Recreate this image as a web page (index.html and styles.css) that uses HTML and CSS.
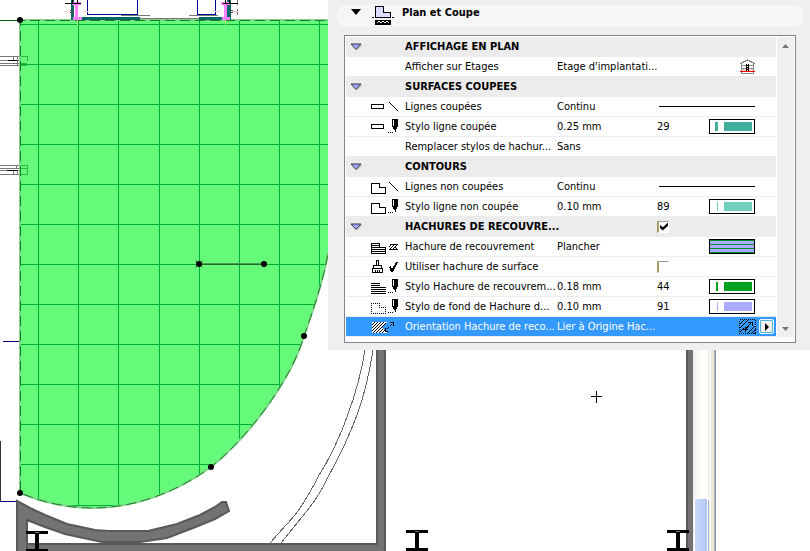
FILE: index.html
```html
<!DOCTYPE html>
<html lang="fr">
<head>
<meta charset="utf-8">
<title>Plan et Coupe</title>
<link rel="stylesheet" href="styles.css">
</head>
<body>
<svg class="defs" width="0" height="0" aria-hidden="true">
  <defs>
    <symbol id="toggle" viewBox="0 0 12 8"><path d="M1 1H11L6 6.500Z" fill="#a5a5ff" stroke="#333"/><path d="M7 7L12 2" stroke="#bbb"/></symbol>
    <symbol id="i-rect" viewBox="0 0 32 19"><path d="M1.500 7.500H13.500V11.500H1.500Z" fill="#fff" stroke="#000"/></symbol>
    <symbol id="i-line" viewBox="0 0 32 19"><path d="M19 5L28 14" stroke="#000"/></symbol>
    <symbol id="i-pen" viewBox="0 0 32 19"><path d="M22 2H28V10H27V12H26V15H25V13H24V12H23V10H22Z"/><path d="M23 3H24V9H23Z" fill="#fff"/><path d="M18 15h1v1h-1zM20 15h1v1h-1zM22 15h1v1h-1z"/></symbol>
    <symbol id="i-shape" viewBox="0 0 32 19"><path d="M1.500 6.500H9.500V10.500H15.500V16.500H1.500Z" fill="#fff" stroke="#000"/></symbol>
    <symbol id="i-cover" viewBox="0 0 32 19"><path d="M1.500 6.500H9.500V10.500H15.500V16.500H1.500ZM1 8.500H9M1 10.500H9M1 12.500H15M1 14.500H15" fill="none" stroke="#000"/></symbol>
    <symbol id="i-hatch" viewBox="0 0 32 19"><path d="M20 7.500H28M19 12.500H28M19 10L22 7M20 12L25 7M23 12L27 8M25 10L27 12" fill="none" stroke="#000"/></symbol>
    <symbol id="i-brush" viewBox="0 0 32 19"><path d="M6.500 8V3.500H8.500V8M3.500 11V8.500H11.500V11M2 11.500H13M2.500 12V15.500H12.500V12M5.500 13V15M7.500 13V15M9.500 13V15" fill="none" stroke="#000"/></symbol>
    <symbol id="i-check" viewBox="0 0 32 19"><path d="M19 10L21 9L22 12L26 5H28L23 15H21Z"/></symbol>
    <symbol id="i-lines" viewBox="0 0 32 19"><path d="M1 6.500H10M1 8.500H10M1 10.500H16M1 12.500H16M1 14.500H16M1 16.500H16" stroke="#000"/></symbol>
    <symbol id="i-dots" viewBox="0 0 32 19"><path d="M1 6.500H10M2 10.500M9.500 8V10.500M11 10.500H16M15.500 12V16M1 16.500H16M1.500 8V16" fill="none" stroke="#000" stroke-dasharray="1 1"/></symbol>
    <symbol id="i-orient" viewBox="0 0 32 19"><path d="M2 5H17L12 10L17 16H2Z" fill="#fff"/><path d="M2 8L5 5M2 11L8 5M2 14L11 5M3 16L14 5M6 16L16 6M9 16L13 12M12 16L15 13" stroke="#000"/><path d="M17 12L23 6" stroke="#000" stroke-dasharray="3 1"/><path d="M20 5.500H23.500V9M15.500 11V14.500H18" fill="none" stroke="#000"/></symbol>
  </defs>
</svg>

<main class="workspace">
  <svg class="plan" viewBox="0 0 810 551" preserveAspectRatio="xMinYMin slice" role="img" aria-label="Dessin en plan">
    <defs>
      <clipPath id="slab"><path d="M20 20H340V200L328 252C325 275 313 311 304 336C292 378 250 436 211 467C177 492 135 508 93 508C68 508 44 503 20 493Z"/></clipPath>
      <linearGradient id="track"><stop offset="0" stop-color="#f0efeb"/><stop offset=".6" stop-color="#fefefa"/><stop offset="1" stop-color="#fefefa"/></linearGradient>
      <linearGradient id="thumb"><stop offset="0" stop-color="#cbd9fc"/><stop offset="1" stop-color="#b0c8f8"/></linearGradient>
      <g id="beam"><path d="M0 0H22V3H13V18H22V22H0V18H9V3H0Z"/><path d="M9 1H13V2H9Z" fill="#777"/></g>
    </defs>

    <g shape-rendering="crispEdges" fill="none">
      <path d="M0 20.500H20" stroke="#006400"/>
      <g stroke="#777">
        <path d="M0 56.500H27.500V60.500M13.500 57V60M17.500 57V65M0 60.500H27M0 63.500H27M0 65.500H27"/>
        <path d="M0 165.500H27.500V174.500M16.500 166V168M0 168.500H27M0 170.500H27M0 174.500H27M13.500 171V174M17.500 171V174"/>
      </g>
      <path d="M8 60.500H17M7 170.500H17" stroke="#000"/>
      <path d="M3 341.500H20M0 501.500H17" stroke="#000080"/>
      <path d="M0.500 441V501" stroke="#333"/>
    </g>

    <g clip-path="url(#slab)">
      <path d="M20 20H340V520H20Z" fill="#66fa7a"/>
      <path d="M38.500 20V520M78.500 20V520M118.500 20V520M159.500 20V520M199.500 20V520M239.500 20V520M279.500 20V520M319.500 20V520M20 24.500H340M20 64.500H340M20 104.500H340M20 144.500H340M20 184.500H340M20 224.500H340M20 264.500H340M20 304.500H340M20 344.500H340M20 384.500H340M20 424.500H340M20 464.500H340M20 505.500H340" stroke="#00ac38" shape-rendering="crispEdges"/>
      <path d="M20 56.500H27.500V60.500M20 63.500H27M20 65.500H27M20 165.500H27.500V174.500M20 168.500H27M20 174.500H27" stroke="#35b045" fill="none" shape-rendering="crispEdges"/>
    </g>
    <path d="M340 20H20V493C44 503 68 508 93 508C135 508 177 492 211 467C250 436 292 378 304 336C313 311 325 275 328 252" fill="none" stroke="#7fd58a" stroke-width="2"/>
    <path d="M340 20.500H20.500V493C44 503 68 508 93 508C135 508 177 492 211 467C250 436 292 378 304 336C313 311 325 275 328 252" fill="none" stroke="#1d7a24" stroke-dasharray="10 5"/>

    <g shape-rendering="crispEdges">
      <path d="M71 0H74V20H71ZM81 17H140V20H81ZM199 17H225V20H199ZM227 0H231V20H227Z" fill="#006666"/>
      <path d="M87.500 0V14.500H137.500V0M197.500 0V14.500H215.500V0" fill="#fff" stroke="#000099"/>
      <path d="M121 15.500H150M189 15.500H218M139 18.500H199M237.500 0V5M237.500 9V15" stroke="#777"/>
      <path d="M64 11.500H71M83 11.500H90M213 11.500H221M232 11.500H239" stroke="#ffd5d5"/>
      <path d="M70 10.500H74M70 12.500H74M230 10.500H233M230 12.500H233" stroke="#555"/>
      <path d="M75 2H78V17H82V20H73V17H75ZM72 2H81V5H72ZM224 2H227V17H230V20H222V17H224ZM221 2H230V5H221Z" fill="#ff80ff"/>
      <path d="M65 3.500H81M223 3.500H238M72.500 0V3M77.500 0V3M225.500 0V3M229.500 0V3" stroke="#000"/>
      <path d="M77.500 20V25M225.500 20V25" stroke="#a5e67a"/>
    </g>

    <g fill="#737373" stroke="#595959" stroke-width="2">
      <path d="M377 340V544H27V560H385V340Z"/>
      <path d="M17 501L30 508L45 515L67 524L95 530L108 531H148L177 524L200 515L215 507L222 502L226 502L229 511L215 519L193 528L167 538L140 542H102L65 534L45 527L27 520V560H17Z"/>
    </g>
    <path d="M686 340H693V551H686Z" fill="#737373"/>
    <path d="M686 340H688V551H686Z" fill="#595959"/>
    <path d="M365 350Q360 382 347 417Q335 450 318 477Q307 499 295 515L270 543M373 350Q367 388 357 415Q345 447 328 477Q320 494 310 507L281 543" fill="none" stroke="#666" shape-rendering="crispEdges"/>
    <path d="M693 340H708V551H693Z" fill="url(#track)"/>
    <path d="M708 340H711V551H708Z" fill="#f0eee6"/>
    <path d="M710 340H711V551H710Z" fill="#fff"/>
    <path d="M711 340H715V551H711Z" fill="#ebe8d8"/>
    <path d="M714 340H715V551H714Z" fill="#b5b09f"/>
    <path d="M715 340H716V551H715Z" fill="#849bbd"/>
    <path d="M694 498H709V551H694Z" fill="#fff"/>
    <path d="M695 499H707V551H695Z" fill="url(#thumb)"/>
    <path d="M708 500H709V551H708Z" fill="#9db5e4"/>
    <use href="#beam" x="26" y="531"/>
    <use href="#beam" x="406" y="530"/>
    <use href="#beam" x="667" y="530"/>
    <path d="M591 396.500H602M596.500 391V403" stroke="#000" shape-rendering="crispEdges"/>
    <path d="M199 263.500H264" stroke="#4a9a50"/>
    <path d="M199 264.500H264" stroke="#1d6a24"/>
    <path d="M195.500 260.500L202.500 267.500M195.500 267.500L202.500 260.500" stroke="#2a8035"/>
    <g fill="#000"><circle cx="20" cy="20" r="3"/><circle cx="199" cy="264" r="3"/><circle cx="264" cy="264" r="3"/><circle cx="304" cy="336" r="3"/><circle cx="211" cy="467" r="3"/><circle cx="20" cy="493" r="3"/></g>
  </svg>

  <section class="panel">
    <header class="panel-head">
      <button class="fold" type="button" aria-label="Replier"><svg width="10" height="6" viewBox="0 0 10 6"><path d="M0 0H10L5 6Z"/></svg></button>
      <svg class="head-icon" width="22" height="20" viewBox="0 0 22 20" shape-rendering="crispEdges"><path d="M3.500 11.500V.500H11.500V6.500H18.500V11.500Z" fill="#dcdcff" stroke="#000"/><path d="M0 11.500H2M20 11.500H22" stroke="#000"/><path d="M3 14H19V19H3Z"/><path d="M5 17L7 15L9 17L11 15L13 17L15 15L17 17" fill="none" stroke="#fff"/></svg>
      <h1>Plan et Coupe</h1>
    </header>

    <div class="list">
      <table class="props">
        <colgroup><col class="c-icon"><col class="c-label"><col class="c-value"><col class="c-edit"></colgroup>
        <tbody>
          <tr class="group"><td><button class="toggle" type="button" aria-label="Replier"><svg width="12" height="8"><use href="#toggle"/></svg></button></td><th colspan="3">AFFICHAGE EN PLAN</th></tr>
          <tr><td></td><td>Afficher sur Etages</td><td>Etage d'implantati...</td><td><div class="edit"><svg class="house" width="15" height="15" viewBox="0 0 15 15" shape-rendering="crispEdges"><path d="M0 4.500H1M14 4.500H15M1 3.500H4M11 3.500H14M3 2.500H6M9 2.500H12M5 1.500H10M7 .500H8M1.500 4V14.500H13.500V4M1 6.500H14M1 9.500H14" fill="none" stroke="#888"/><path d="M2 10H13V12H2Z" fill="#ffd0c8"/><path d="M6 5H7V12H6ZM8 5H9V12H8ZM7 6H8V7H7ZM7 8H8V9H7ZM7 10H8V11H7Z"/><path d="M0 12.500H15" stroke="#f00"/></svg></div></td></tr>

          <tr class="group"><td><button class="toggle" type="button" aria-label="Replier"><svg width="12" height="8"><use href="#toggle"/></svg></button></td><th colspan="3">SURFACES COUPEES</th></tr>
          <tr><td><svg class="icon"><use href="#i-rect"/><use href="#i-line"/></svg></td><td>Lignes coupées</td><td>Continu</td><td><div class="edit"><span class="stroke"></span></div></td></tr>
          <tr><td><svg class="icon"><use href="#i-rect"/><use href="#i-pen"/></svg></td><td>Stylo ligne coupée</td><td>0.25 mm</td><td><div class="edit"><span>29</span><span class="swatch teal"><i class="w3"></i><b></b></span></div></td></tr>
          <tr><td></td><td>Remplacer stylos de hachur...</td><td>Sans</td><td></td></tr>

          <tr class="group"><td><button class="toggle" type="button" aria-label="Replier"><svg width="12" height="8"><use href="#toggle"/></svg></button></td><th colspan="3">CONTOURS</th></tr>
          <tr><td><svg class="icon"><use href="#i-shape"/><use href="#i-line"/></svg></td><td>Lignes non coupées</td><td>Continu</td><td><div class="edit"><span class="stroke"></span></div></td></tr>
          <tr><td><svg class="icon"><use href="#i-shape"/><use href="#i-pen"/></svg></td><td>Stylo ligne non coupée</td><td>0.10 mm</td><td><div class="edit"><span>89</span><span class="swatch aqua"><i class="w1"></i><b></b></span></div></td></tr>

          <tr class="group"><td><button class="toggle" type="button" aria-label="Replier"><svg width="12" height="8"><use href="#toggle"/></svg></button></td><th colspan="2"><label for="cover">HACHURES DE RECOUVRE...</label></th><td><div class="edit"><input type="checkbox" id="cover" checked></div></td></tr>
          <tr><td><svg class="icon"><use href="#i-cover"/><use href="#i-hatch"/></svg></td><td>Hachure de recouvrement</td><td>Plancher</td><td><div class="edit"><span class="swatch floor"></span></div></td></tr>
          <tr><td><svg class="icon"><use href="#i-brush"/><use href="#i-check"/></svg></td><td colspan="2"><label for="surface">Utiliser hachure de surface</label></td><td><div class="edit"><input type="checkbox" id="surface"></div></td></tr>
          <tr><td><svg class="icon"><use href="#i-lines"/><use href="#i-pen"/></svg></td><td>Stylo Hachure de recouvrem...</td><td>0.18 mm</td><td><div class="edit"><span>44</span><span class="swatch green"><i class="w2"></i><b></b></span></div></td></tr>
          <tr><td><svg class="icon"><use href="#i-dots"/><use href="#i-pen"/></svg></td><td>Stylo de fond de Hachure d...</td><td>0.10 mm</td><td><div class="edit"><span>91</span><span class="swatch lilac"><i class="w1"></i><b></b></span></div></td></tr>
          <tr class="selected"><td><svg class="icon"><use href="#i-orient"/></svg></td><td>Orientation Hachure de reco...</td><td>Lier à Origine Hac...</td><td><div class="edit tools"><svg width="17" height="15" viewBox="0 0 17 15" shape-rendering="crispEdges"><path d="M.500 .500H16.500V14.500H.500Z" fill="none" stroke="#000" stroke-dasharray="1 1"/><path d="M1 5L5 1M1 9L9 1M1 13L5 9M12 15L17 10M15 15L17 13M8 15L16 7M6 11L12 4M9 3.500H13.500V7M6.500 8V13M4 10.500H9" fill="none" stroke="#000"/></svg><button class="play" type="button" aria-label="Options"><svg width="4" height="8" viewBox="0 0 4 8"><path d="M0 0L4 4L0 8Z"/></svg></button></div></td></tr>
        </tbody>
      </table>
      <div class="scroll">
        <button type="button" aria-label="Monter"><svg width="7" height="4" viewBox="0 0 7 4"><path d="M0 4L3.500 0L7 4Z"/></svg></button>
        <button type="button" aria-label="Descendre"><svg width="7" height="4" viewBox="0 0 7 4"><path d="M0 0L3.500 4L7 0Z"/></svg></button>
      </div>
    </div>
  </section>
</main>
</body>
</html>
```
FILE: styles.css
```css
* { box-sizing: border-box; }

body {
  margin: 0;
  background: #fff;
  color: #000;
  font: 11px/19px "DejaVu Sans Condensed", "Noto Sans", sans-serif;
}

button {
  padding: 0;
  border: 0;
  background: none;
}

svg { display: block; }

.defs { position: absolute; }

.workspace {
  position: relative;
  display: grid;
  grid-template-columns: 328fr 482fr;
  align-items: start;
  min-height: 100vh;
  overflow: hidden;
}

.plan {
  position: absolute;
  inset: 0;
  width: 100%;
  height: 100%;
}

.panel {
  position: relative;
  grid-column: 2;
  padding: 5px 6px 7px 8px;
  background: #efefef;
}

.panel-head {
  display: flex;
  align-items: flex-start;
  height: 22px;
  margin-bottom: 8px;
  padding-left: 15px;
  border-radius: 11px;
  background: #f6f6f6;
}

.fold { margin-top: 4px; }
.head-icon { margin: 1px 8px 0 11px; }

h1 {
  margin: 0;
  font-size: 11px;
  line-height: 15px;
}

.list {
  display: flex;
  margin: 0 8px;
  padding: 1px 1px 5px;
  border: 1px solid #7f848e;
  background: #fff;
}

.props {
  flex: 1;
  width: 0;
  table-layout: fixed;
  border-spacing: 0;
}

.c-icon { width: 59px; }
.c-label { width: 152px; }
.c-value { width: 100px; }

td, th {
  height: 20px;
  padding: 0;
  border-bottom: 1px solid #ececec;
  text-align: left;
  white-space: nowrap;
}

.group { background: #ececec; }
.selected { background: #3399ff; color: #fff; }

.toggle { display: block; margin-left: 4px; }

.icon {
  width: 32px;
  height: 19px;
  margin-left: 24px;
  shape-rendering: crispEdges;
}

.edit {
  display: flex;
  align-items: center;
  justify-content: space-between;
  height: 19px;
  padding-right: 21px;
}

.house, .floor { margin-left: auto; }

.tools {
  justify-content: flex-end;
  gap: 3px;
  padding-right: 2px;
}

.stroke {
  flex: 1;
  height: 1px;
  margin-left: 2px;
  background: #000;
}

.swatch {
  display: flex;
  gap: 6px;
  width: 46px;
  height: 15px;
  padding: 2px;
  border: 1px solid #000;
  background: #fff;
}

.swatch i { margin-left: auto; background: currentColor; }
.swatch b { width: 28px; background: currentColor; }
.w1 { width: 1px; }
.w2 { width: 2px; }
.w3 { width: 3px; }

.teal { color: #3fae9b; }
.aqua { color: #72cebe; }
.green { color: #00a11f; }
.lilac { color: #aaaaff; }

.floor {
  padding: 0;
  background: repeating-linear-gradient(#00902c 0, #00902c 1px, #aaaaff 1px, #aaaaff 4px);
}

input[type="checkbox"] {
  appearance: none;
  width: 12px;
  height: 12px;
  margin: 0;
  border: 1px solid #fff;
  border-top: 1px solid #a09c8c;
  border-left: 2px solid #ab9c6c;
  background: #fff;
}

input[type="checkbox"]:checked::after {
  content: "";
  display: block;
  width: 8px;
  height: 8px;
  margin: 1px;
  background: #000;
  clip-path: polygon(0 30%, 35% 60%, 100% 0, 100% 40%, 35% 100%, 0 70%);
}

.play {
  display: grid;
  place-items: center;
  width: 15px;
  height: 15px;
  border: 1px solid #e8f8ff;
  border-radius: 2px;
  background: #f2f2f2;
  box-shadow: inset 0 0 0 1px #48b8d8;
}

.scroll {
  display: flex;
  flex-direction: column;
  justify-content: space-between;
  width: 17px;
  margin-left: 1px;
  background: #efefef;
}

.scroll button {
  display: grid;
  place-items: center;
  height: 17px;
  fill: #777;
}
```
